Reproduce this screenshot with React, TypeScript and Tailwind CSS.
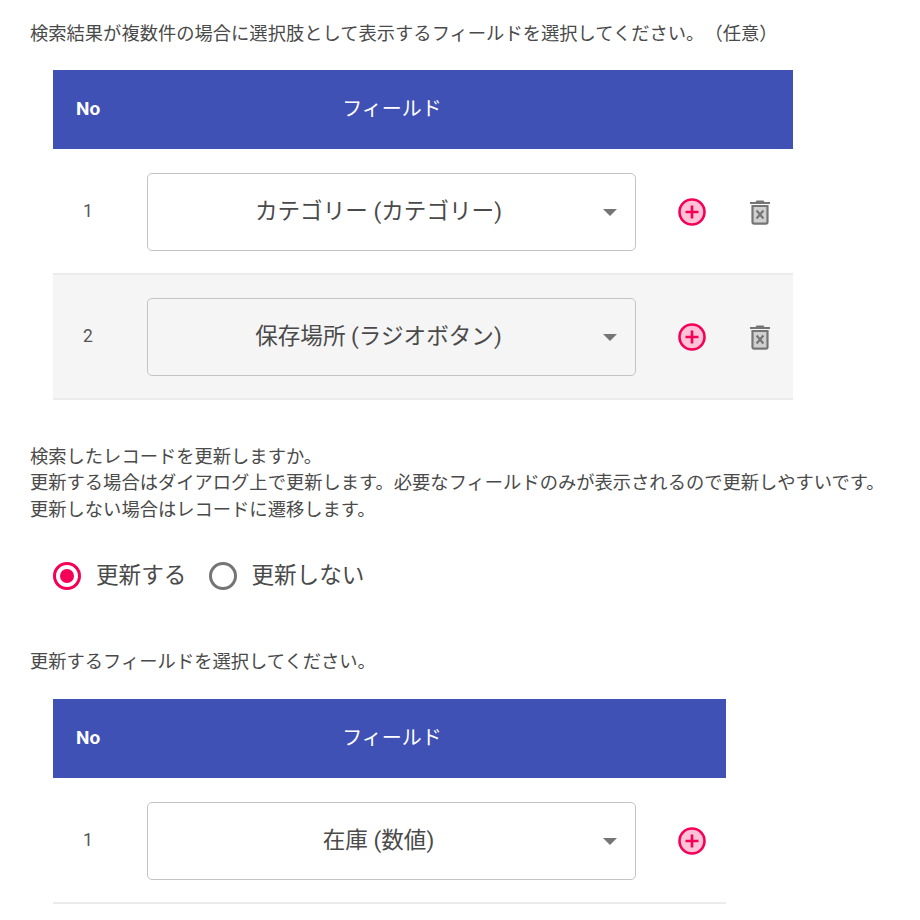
const font = { fontFamily: '"Roboto","Noto Sans CJK JP",sans-serif' };

function Plus() {
  return (
    <svg width="30" height="30" viewBox="0 0 30 30" className="shrink-0">
      <circle cx="15" cy="15" r="12.5" fill="#ffc2d7" stroke="#f50057" strokeWidth="2.6" />
      <path d="M15 8.5v13M8.5 15h13" stroke="#f50057" strokeWidth="2.6" fill="none" />
    </svg>
  );
}

function Trash() {
  return (
    <svg width="24" height="28" viewBox="0 0 24 28" className="shrink-0">
      <path d="M8.5 2.5h7l1 1.5H22v2H2V4h5.5z" fill="#757575" />
      <path d="M4.5 8h15v16a1.6 1.6 0 0 1-1.6 1.6H6.1A1.6 1.6 0 0 1 4.5 24z" fill="#d0d0d0" stroke="#757575" strokeWidth="2.2" />
      <path d="M8.6 12.5l6.8 8M15.4 12.5l-6.8 8" stroke="#757575" strokeWidth="2.2" fill="none" />
    </svg>
  );
}

function Select({ label, shaded }: { label: string; shaded?: boolean }) {
  return (
    <div className={`relative w-[489px] h-[78px] rounded-[5px] border border-[#c4c4c4] flex items-center justify-center pr-[26px] pt-[2px] text-[22.6px] text-[#4a4a4a] ${shaded ? "bg-[#f5f5f5]" : "bg-white"}`}>
      <span>{label}</span>
      <span className="absolute right-[18px] top-[35px] w-0 h-0 border-x-[7px] border-x-transparent border-t-[7px] border-t-[#757575]" />
    </div>
  );
}

function Row({ no, label, shaded, trash }: { no: number; label: string; shaded?: boolean; trash?: boolean }) {
  return (
    <div className={`flex items-center border-b-2 border-[#ebebeb] ${shaded ? "h-[125px] pt-[1px] bg-[#f5f5f5]" : "h-[126px] pt-[3px] pb-[1px] bg-white"}`}>
      <div className="w-[70px] pl-[30px] text-[17.5px] text-[#555]">{no}</div>
      <div className="ml-[24px]"><Select label={label} shaded={shaded} /></div>
      <div className="ml-[41px]"><Plus /></div>
      {trash && <div className="ml-[41px]"><Trash /></div>}
    </div>
  );
}

function Header() {
  return (
    <div className="flex items-center h-[79px] bg-[#3f51b5] text-white">
      <div className="w-[70px] pl-[23px] text-[19px] font-bold">No</div>
      <div className="w-[514px] pl-[24px] text-center text-[20px]">フィールド</div>
    </div>
  );
}

export default function App() {
  return (
    <div style={font} className="w-[920px] h-[920px] overflow-hidden bg-white pt-[21px] pl-[30px] text-[#4a4a4a] text-[18.3px] leading-[26.5px] [text-spacing-trim:space-all]">
      <p className="whitespace-nowrap">検索結果が複数件の場合に選択肢として表示するフィールドを選択してください。（任意）</p>
      <div className="ml-[23px] mt-[22px] w-[740px]">
        <Header />
        <Row no={1} label="カテゴリー (カテゴリー)" trash />
        <Row no={2} label="保存場所 (ラジオボタン)" shaded trash />
      </div>
      <div className="mt-[44px]">
        <p>検索したレコードを更新しますか。</p>
        <p className="whitespace-nowrap">更新する場合はダイアログ上で更新します。必要なフィールドのみが表示されるので更新しやすいです。</p>
        <p>更新しない場合はレコードに遷移します。</p>
      </div>
      <div className="ml-[23px] mt-[33px] flex items-center h-[40px] text-[22.6px]">
        <span className="w-[28px] h-[28px] rounded-full border-[3px] border-[#f50057] flex items-center justify-center">
          <span className="w-[14px] h-[14px] rounded-full bg-[#f50057]" />
        </span>
        <span className="ml-[15px]">更新する</span>
        <span className="ml-[23px] w-[28px] h-[28px] rounded-full border-[3px] border-[#757575]" />
        <span className="ml-[14px]">更新しない</span>
      </div>
      <p className="mt-[53px]">更新するフィールドを選択してください。</p>
      <div className="ml-[23px] mt-[23px] w-[673px]">
        <Header />
        <Row no={1} label="在庫 (数値)" />
      </div>
    </div>
  );
}
